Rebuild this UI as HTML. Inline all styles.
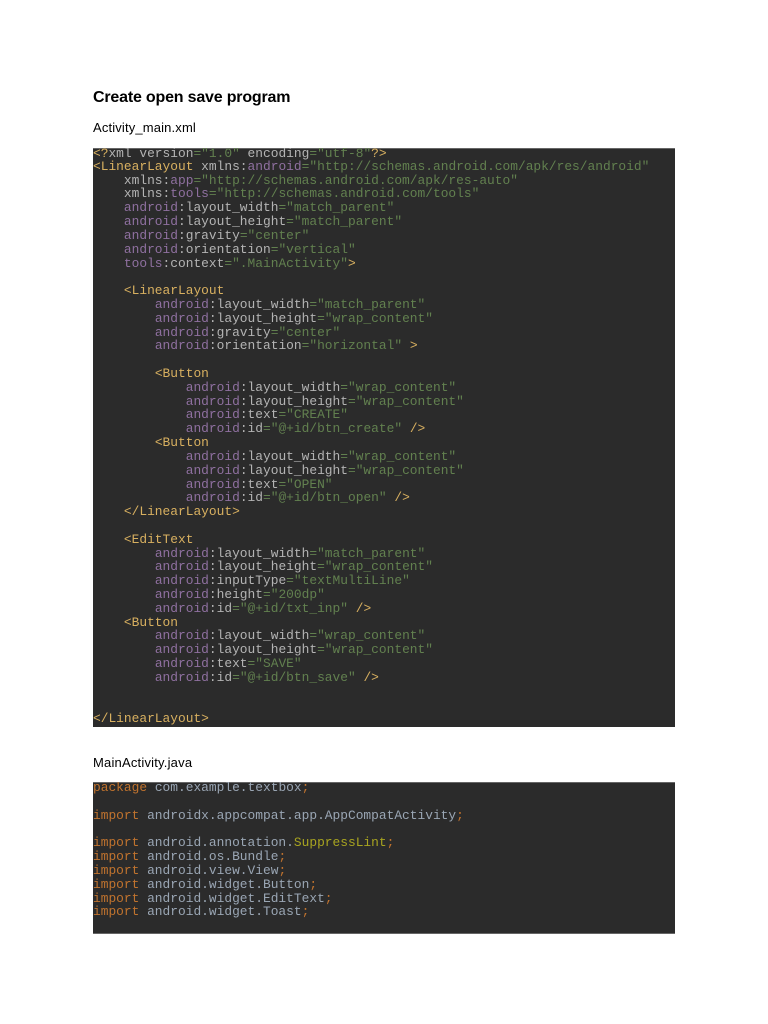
<!DOCTYPE html>
<html><head><meta charset="utf-8"><style>
html,body{margin:0;padding:0;background:#fff;width:768px;height:1024px;overflow:hidden}
body{position:relative;font-family:"Liberation Sans",sans-serif;color:#000}
.t{position:absolute;left:93px;white-space:nowrap}
.b{position:absolute;left:93px;width:582px;background:linear-gradient(#666 1px,#2b2b2b 1px);overflow:hidden}
pre{margin:0;font:12.89px/13.82px "Liberation Mono",monospace;color:#b4b4b4;filter:blur(.25px)}
i{font-style:normal}
.o{color:#d8b060}.p{color:#8f70a0}.g{color:#62804f}
.k{color:#c0732e}.y{color:#a8a420}.c{color:#9aa6b4}
.s{position:relative;top:1px}
</style></head><body>
<div class="t" style="top:89px;font-size:16px;font-weight:bold;letter-spacing:-.19px">Create open save program</div>
<div class="t" style="top:120px;font-size:13px;letter-spacing:.15px">Activity_main.xml</div>
<div class="b" style="top:148px;height:579px"><pre style="margin-top:-2px"><span class="s"><i class="o">&lt;?</i>xml version<i class="g">="1.0"</i> encoding<i class="g">="utf-8"</i><i class="o">?&gt;</i></span>
<i class="o">&lt;LinearLayout</i> xmlns:<i class="p">android</i><i class="g">="http://schemas.android.com/apk/res/android"</i>
    xmlns:<i class="p">app</i><i class="g">="http://schemas.android.com/apk/res-auto"</i>
    xmlns:<i class="p">tools</i><i class="g">="http://schemas.android.com/tools"</i>
    <i class="p">android</i>:layout_width<i class="g">="match_parent"</i>
    <i class="p">android</i>:layout_height<i class="g">="match_parent"</i>
    <i class="p">android</i>:gravity<i class="g">="center"</i>
    <i class="p">android</i>:orientation<i class="g">="vertical"</i>
    <i class="p">tools</i>:context<i class="g">=".MainActivity"</i><i class="o">&gt;</i>

    <i class="o">&lt;LinearLayout</i>
        <i class="p">android</i>:layout_width<i class="g">="match_parent"</i>
        <i class="p">android</i>:layout_height<i class="g">="wrap_content"</i>
        <i class="p">android</i>:gravity<i class="g">="center"</i>
        <i class="p">android</i>:orientation<i class="g">="horizontal"</i> <i class="o">&gt;</i>

        <i class="o">&lt;Button</i>
            <i class="p">android</i>:layout_width<i class="g">="wrap_content"</i>
            <i class="p">android</i>:layout_height<i class="g">="wrap_content"</i>
            <i class="p">android</i>:text<i class="g">="CREATE"</i>
            <i class="p">android</i>:id<i class="g">="@+id/btn_create"</i> <i class="o">/&gt;</i>
        <i class="o">&lt;Button</i>
            <i class="p">android</i>:layout_width<i class="g">="wrap_content"</i>
            <i class="p">android</i>:layout_height<i class="g">="wrap_content"</i>
            <i class="p">android</i>:text<i class="g">="OPEN"</i>
            <i class="p">android</i>:id<i class="g">="@+id/btn_open"</i> <i class="o">/&gt;</i>
    <i class="o">&lt;/LinearLayout&gt;</i>

    <i class="o">&lt;EditText</i>
        <i class="p">android</i>:layout_width<i class="g">="match_parent"</i>
        <i class="p">android</i>:layout_height<i class="g">="wrap_content"</i>
        <i class="p">android</i>:inputType<i class="g">="textMultiLine"</i>
        <i class="p">android</i>:height<i class="g">="200dp"</i>
        <i class="p">android</i>:id<i class="g">="@+id/txt_inp"</i> <i class="o">/&gt;</i>
    <i class="o">&lt;Button</i>
        <i class="p">android</i>:layout_width<i class="g">="wrap_content"</i>
        <i class="p">android</i>:layout_height<i class="g">="wrap_content"</i>
        <i class="p">android</i>:text<i class="g">="SAVE"</i>
        <i class="p">android</i>:id<i class="g">="@+id/btn_save"</i> <i class="o">/&gt;</i>


<i class="o">&lt;/LinearLayout&gt;</i></pre></div>
<div class="t" style="top:755px;font-size:13px;letter-spacing:.2px">MainActivity.java</div>
<div class="b" style="top:782px;height:152px;border-bottom:1px solid #666;box-sizing:border-box"><pre class="c" style="margin-top:-1px;color:#9aa6b4"><i class="k">package</i> com.example.textbox<i class="k">;</i>

<i class="k">import</i> androidx.appcompat.app.AppCompatActivity<i class="k">;</i>

<i class="k">import</i> android.annotation.<i class="y">SuppressLint</i><i class="k">;</i>
<i class="k">import</i> android.os.Bundle<i class="k">;</i>
<i class="k">import</i> android.view.View<i class="k">;</i>
<i class="k">import</i> android.widget.Button<i class="k">;</i>
<i class="k">import</i> android.widget.EditText<i class="k">;</i>
<i class="k">import</i> android.widget.Toast<i class="k">;</i></pre></div>
</body></html>
